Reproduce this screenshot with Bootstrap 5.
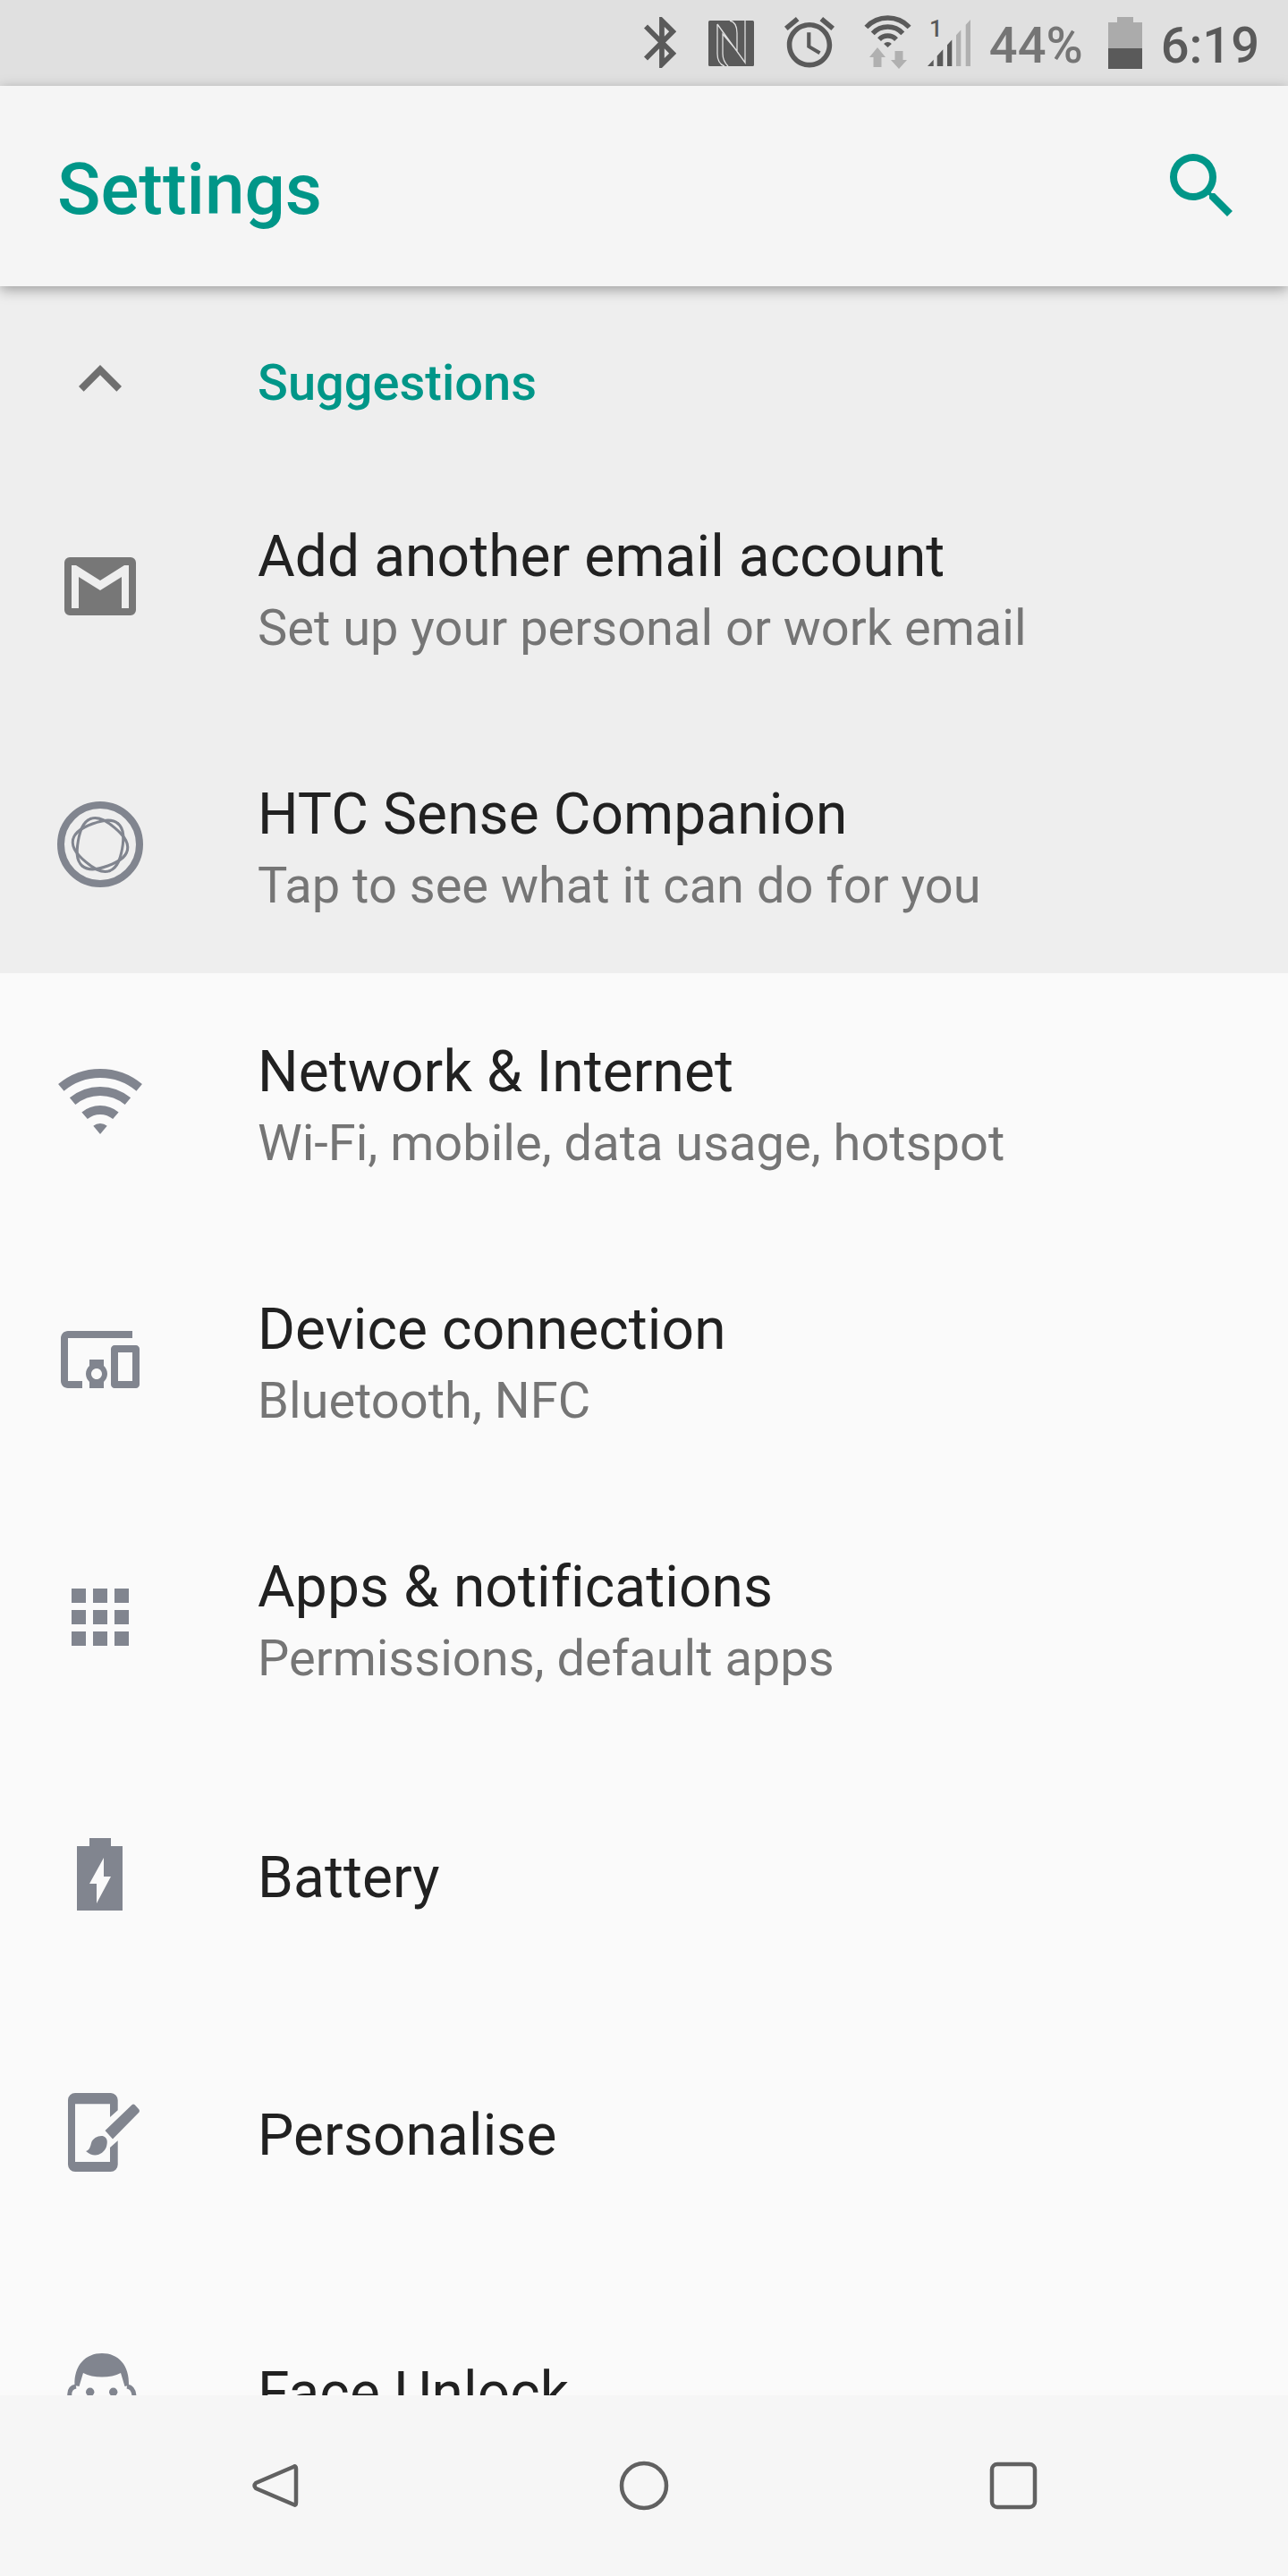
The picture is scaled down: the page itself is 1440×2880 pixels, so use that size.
<!doctype html>
<html lang="en"><head><meta charset="utf-8">
<title>Settings</title>
<link href="https://cdn.jsdelivr.net/npm/bootstrap@5.3.0/dist/css/bootstrap.min.css" rel="stylesheet">
<style>
html,body{margin:0;background:#fafafa}
.phone{width:1440px;height:2880px;font-family:Roboto,"Liberation Sans",sans-serif;overflow:hidden}
.status{height:96px;background:#e0e0e0;color:#5a5a5a;font-size:56px;font-weight:500;padding-right:32px;line-height:72px}
.status span{padding-top:6px}
.status .pct{color:#757575;margin-left:21px}
.status svg{height:96px;display:block;flex:none}
.s1{width:36px}
.s2{width:51px;margin-left:36px}
.s3{width:56px;margin-left:34px}
.s4{width:55px;margin-left:32px}
.s5{width:48px;margin-left:17px}
.s6{width:38px;margin-left:28px}
.clock{margin-left:21px}
.dk{fill:#5a5a5a}
.lt{fill:#b0b0b0}
.appbar{height:224px;background:#f5f5f5;box-shadow:0 4px 14px rgba(0,0,0,.34);z-index:2;padding:0 48px 0 64px}
.appbar h1{font-size:80px;font-weight:500;color:#009688;margin:0;line-height:1;padding-top:7px}
.listarea{min-height:0;overflow:hidden;background:#fafafa}
.sugg{background:#eee}
.rowx{height:288px;flex:none}
.rowx>div{padding-top:7px}
.ico{width:96px;height:96px;flex:none;margin:0 128px 0 64px;display:block}
.ttl{font-size:64px;line-height:84px;color:#212121;letter-spacing:.1px}
.sub{font-size:56px;line-height:74px;color:#757575}
.head{height:192px;padding-top:16px}
.head span{font-size:56px;font-weight:500;color:#009688;line-height:72px;padding-top:7px}
.navb{height:202px;background:#f6f6f6;gap:353px}
.navb svg{width:60px;height:60px;display:block;fill:none;stroke:#616161;stroke-width:4.5px;stroke-linejoin:round}
.ig{fill:#81858f}
.arcs{fill:none;stroke:#81858f;stroke-width:10px}
.arcs2{fill:none;stroke:#5a5a5a;stroke-width:5.4px}
.wave{fill:none;stroke:#81858f;stroke-width:3px;stroke-linecap:round}
.ear{fill:none;stroke:#81858f;stroke-width:5px}
</style></head><body>
<div class="phone d-flex flex-column">
<div class="status flex-shrink-0 d-flex align-items-center justify-content-end">
<svg class="s1 dk" viewBox="0 0 36 96"><path transform="translate(-14.25 13.3) scale(2.85)" d="M17.71 7.71L12 2h-1v7.59L6.41 5 5 6.41 10.59 12 5 17.59 6.41 19 11 14.41V22h1l5.71-5.71-4.3-4.29 4.3-4.29zM13 5.83l1.88 1.88L13 9.59V5.83zm1.88 10.46L13 18.17v-3.76l1.88 1.88z"/></svg>
<svg class="s2" viewBox="0 0 51 96"><g transform="translate(0 23)"><rect class="dk" width="51" height="51" rx="1.5"/><path d="M10 4V37Q10 48 18 51M10 4L41 47V0M24 0Q32 2 32 14V34L16 15V37Q16 45 22 51" fill="none" stroke="#e0e0e0" stroke-width="1.3"/></g></svg>
<svg class="s3 dk" viewBox="0 0 56 96"><path transform="translate(-5.6 13.8) scale(2.8)" d="M22 5.72l-4.6-3.86-1.29 1.53 4.6 3.86L22 5.72zM7.88 3.39L6.6 1.86 2 5.71l1.29 1.53 4.59-3.85zM12.5 8H11v6l4.75 2.85.75-1.23-4-2.37V8zM12 4c-4.97 0-9 4.03-9 9s4.02 9 9 9c4.97 0 9-4.03 9-9s-4.03-9-9-9zm0 16c-3.87 0-7-3.13-7-7s3.13-7 7-7 7 3.13 7 7-3.13 7-7 7z"/></svg>
<svg class="s4" viewBox="0 0 55 96"><path class="arcs2" d="M3.4 30.5A33 33 0 0 1 51.6 30.5M10.7 37.3A23 23 0 0 1 44.3 37.3M18 44.1A13 13 0 0 1 37 44.1"/><path class="dk" d="M27.5 53L23.1 48.9A6 6 0 0 1 31.9 48.9Z"/><path class="lt" d="M16 53L25 64H20.5V75H11.5V64H7ZM35.5 57H44.5V67H49L40 77L31 67H35.5Z"/></svg>
<svg class="s5" viewBox="0 0 48 96"><text x="9.5" y="41" font-size="26" font-weight="500" text-anchor="middle" fill="#5a5a5a">1</text><path class="dk" d="M0 74L6.7 66.7V74ZM10.7 62.4L17.3 55.3V74H10.7ZM22 50.2L27.3 44.4V74H22Z"/><path class="lt" d="M32 39.3L37.3 33.6V74H32ZM42.7 27.7L48 22V74H42.7Z"/></svg>
<span class="pct">44%</span>
<svg class="s6" viewBox="0 0 38 96"><path fill="#ababab" d="M10 19H28V25H38V54H0V25H10Z"/><rect class="dk" y="54" width="38" height="23"/></svg>
<span class="clock">6:19</span>
</div>
<div class="appbar flex-shrink-0 position-relative d-flex align-items-center justify-content-between"><h1>Settings</h1>
<svg width="96" height="96" viewBox="0 0 24 24" fill="#009688"><path d="M15.5 14h-.79l-.28-.27A6.47 6.47 0 0 0 16 9.5 6.5 6.5 0 1 0 9.5 16c1.61 0 3.09-.59 4.23-1.57l.27.28v.79l5 4.99L20.49 19l-4.99-5zm-6 0C7.01 14 5 11.99 5 9.5S7.01 5 9.5 5 14 7.01 14 9.5 11.99 14 9.5 14z"/></svg></div>
<div class="listarea flex-grow-1">
<div class="sugg">
<div class="head d-flex align-items-center"><svg class="ico" viewBox="0 0 24 24" fill="#6f6f6f"><path d="M12 8l-6 6 1.41 1.41L12 10.83l4.59 4.58L18 14z"/></svg><span>Suggestions</span></div>
<div class="rowx d-flex align-items-center"><svg class="ico" viewBox="0 0 96 96"><path fill="#777" fill-rule="evenodd" d="M14 15H82A6 6 0 0 1 88 21V74A6 6 0 0 1 82 80H14A6 6 0 0 1 8 74V21A6 6 0 0 1 14 15ZM16 24V72H24V37L48 52L72 37V72H80V24H75L48 41L21 24Z"/></svg><div><div class="ttl">Add another email account</div><div class="sub">Set up your personal or work email</div></div></div>
<div class="rowx d-flex align-items-center"><svg class="ico" viewBox="0 0 96 96"><circle cx="48" cy="48" r="44" fill="none" stroke="#81858f" stroke-width="8"/><g class="wave" transform="translate(48 48.5)"><path transform="rotate(10)" d="M31 0C31 10 21.16 16.65 12.5 21.65C3.84 26.65-6.84 31.85-15.5 26.85"/><path transform="rotate(130)" d="M31 0C31 10 21.16 16.65 12.5 21.65C3.84 26.65-6.84 31.85-15.5 26.85"/><path transform="rotate(250)" d="M31 0C31 10 21.16 16.65 12.5 21.65C3.84 26.65-6.84 31.85-15.5 26.85"/><path transform="rotate(70)" d="M31 0C31 10 21.16 16.65 12.5 21.65C3.84 26.65-6.84 31.85-15.5 26.85"/><path transform="rotate(190)" d="M31 0C31 10 21.16 16.65 12.5 21.65C3.84 26.65-6.84 31.85-15.5 26.85"/><path transform="rotate(310)" d="M31 0C31 10 21.16 16.65 12.5 21.65C3.84 26.65-6.84 31.85-15.5 26.85"/></g></svg><div><div class="ttl">HTC Sense Companion</div><div class="sub">Tap to see what it can do for you</div></div></div>
</div>
<div class="rowx d-flex align-items-center"><svg class="ico" viewBox="0 0 96 96"><path class="arcs" d="M4.3 31.9A68 68 0 0 1 91.7 31.9M17.1 47.2A48 48 0 0 1 78.9 47.2M30.6 63.3A27 27 0 0 1 65.4 63.3"/><path class="ig" d="M48 84L40.3 74.8A12 12 0 0 1 55.7 74.8Z"/></svg><div><div class="ttl">Network &amp; Internet</div><div class="sub">Wi-Fi, mobile, data usage, hotspot</div></div></div>
<div class="rowx d-flex align-items-center"><svg class="ico ig" viewBox="0 0 24 24"><path d="M3 6h18V4H3c-1.1 0-2 .9-2 2v12c0 1.1.9 2 2 2h4v-2H3V6zm10 6H9v1.78c-.61.55-1 1.33-1 2.22s.39 1.67 1 2.22V20h4v-1.78c.61-.55 1-1.34 1-2.22s-.39-1.67-1-2.22V12zm-2 5.5c-.83 0-1.5-.67-1.5-1.5s.67-1.5 1.5-1.5 1.5.67 1.5 1.5-.67 1.5-1.5 1.5zM22 8h-6c-.5 0-1 .5-1 1v10c0 .5.5 1 1 1h6c.5 0 1-.5 1-1V9c0-.5-.5-1-1-1zm-1 10h-4v-8h4v8z"/></svg><div><div class="ttl">Device connection</div><div class="sub">Bluetooth, NFC</div></div></div>
<div class="rowx d-flex align-items-center"><svg class="ico ig" viewBox="0 0 24 24"><path d="M4 8h4V4H4v4zm6 12h4v-4h-4v4zm-6 0h4v-4H4v4zm0-6h4v-4H4v4zm6 0h4v-4h-4v4zm6-10v4h4V4h-4zm-6 4h4V4h-4v4zm6 6h4v-4h-4v4zm0 6h4v-4h-4v4z"/></svg><div><div class="ttl">Apps &amp; notifications</div><div class="sub">Permissions, default apps</div></div></div>
<div class="rowx d-flex align-items-center"><svg class="ico ig" viewBox="0 0 96 96"><path fill-rule="evenodd" d="M22 16H36V7H60V16H73V88H22ZM52 29L36 58H44V80L60 50H52Z"/></svg><div class="ttl">Battery</div></div>
<div class="rowx d-flex align-items-center"><svg class="ico ig" viewBox="0 0 96 96"><path d="M20 4H60A8 8 0 0 1 67.7 12V23.3L59 31V16.3H20V81H59V65L67.7 57.3V84A8 8 0 0 1 59.7 92H20A8 8 0 0 1 12 84V12A8 8 0 0 1 20 4Z"/><path d="M83.5 17.2Q85 16 86.5 17L91.5 22.5Q92.5 24 91.5 25.5L62 55.5L53.5 46ZM32 69C36 68 37 64 38 60C40 54 47 51 52 52.5C57 55 56 60 55 64C52 72 42 78 32 69Z"/></svg><div class="ttl">Personalise</div></div>
<div class="rowx d-flex align-items-center"><svg class="ico ig" viewBox="0 0 96 96"><path d="M19.5 43C18.5 20 32 7 50 7C68 7 81 20 80 43L75.5 44L71 29C60 35 40 35 29 29L24.5 44Z"/><circle cx="36.7" cy="50.3" r="4.7"/><circle cx="62.7" cy="50.3" r="4.7"/><path class="ear" d="M21 44C15 45 13 49 14 56M78 44C84 45 86 49 86 56"/></svg><div class="ttl">Face Unlock</div></div>
</div>
<div class="navb flex-shrink-0 d-flex align-items-center justify-content-center">
<svg viewBox="0 0 60 60"><path d="M51 9Q54 7 54 11V49Q54 53 51 51L9 33Q6 30 9 27Z"/></svg>
<svg viewBox="0 0 60 60"><circle cx="30" cy="30" r="25"/></svg>
<svg viewBox="0 0 60 60"><rect x="6" y="6" width="48" height="48" rx="6"/></svg>
</div>
</div>
</body></html>
